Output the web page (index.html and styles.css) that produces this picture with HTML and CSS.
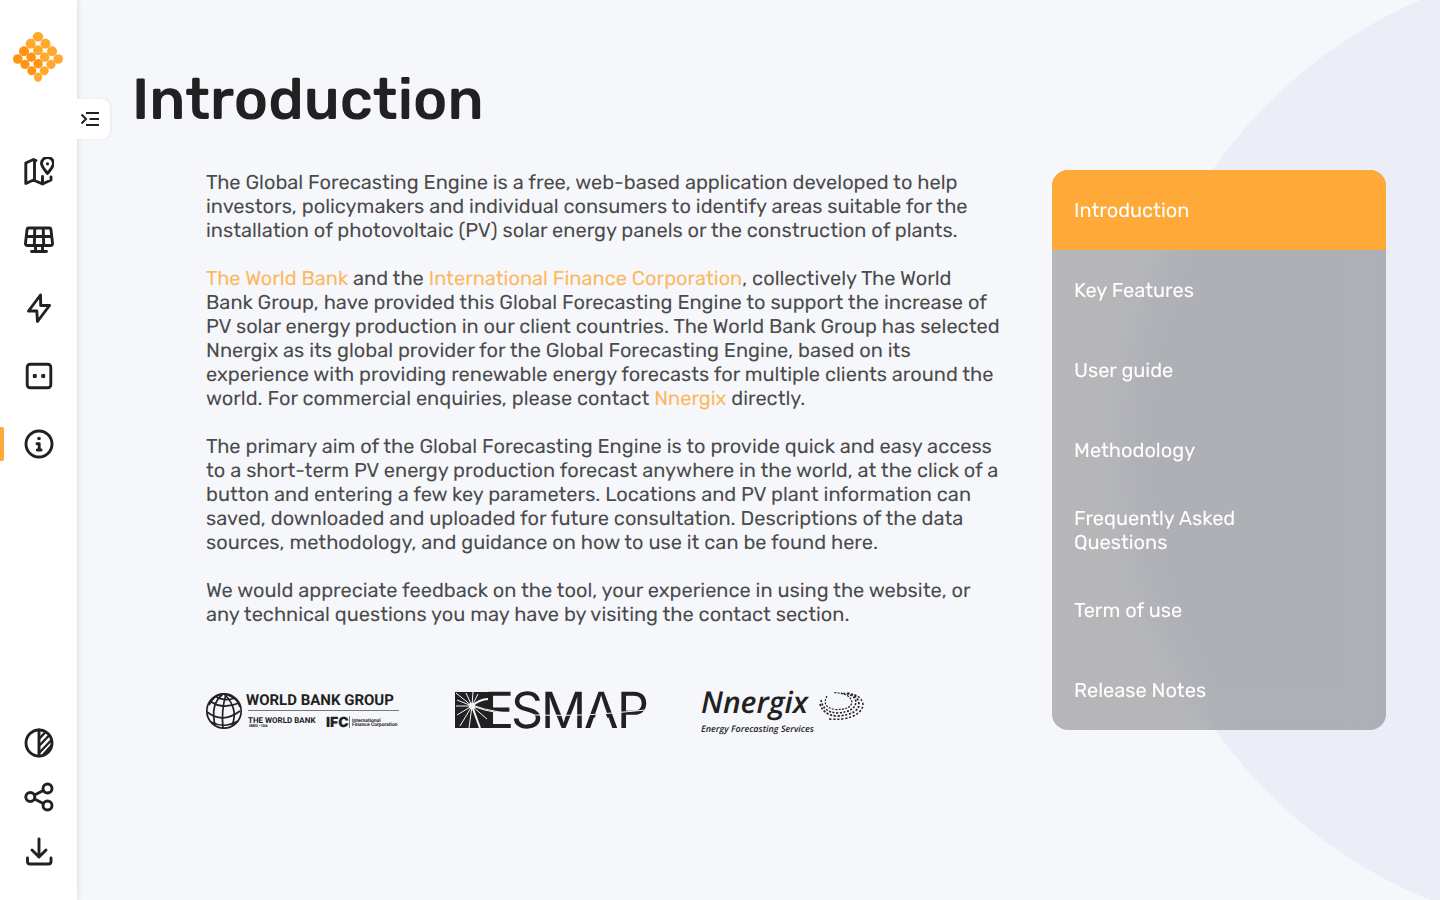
FILE: index.html
```html
<!DOCTYPE html>
<html lang="en">
<head>
<meta charset="utf-8">
<meta name="viewport" content="width=device-width, initial-scale=1">
<title>Global Forecasting Engine – Introduction</title>
<link rel="stylesheet" href="styles.css">
</head>
<body>
<div class="app">
  <aside class="sidebar">
    <a class="brand" href="#" aria-label="Home">
      <svg width="52" height="50" viewBox="0 0 52 50" fill="#ffa92f">
        <ellipse cx="25" cy="4.8" rx="5.3" ry="4.8"/>
        <circle cx="17.7" cy="11.8" r="5"/><circle cx="32.5" cy="11.8" r="5"/>
        <circle cx="11" cy="19.2" r="5" fill="#ff9312"/><circle cx="25" cy="18.3" r="5"/><circle cx="39" cy="19.2" r="5"/>
        <circle cx="4.8" cy="27" r="4.8" fill="#ff9312"/><circle cx="18.2" cy="25.2" r="4.8" fill="#ff9312"/><circle cx="31.7" cy="25.2" r="4.8"/><circle cx="45.2" cy="27" r="4.8"/>
        <circle cx="12" cy="32.4" r="4.6" fill="#ff9312"/><circle cx="25" cy="31.7" r="4.7" fill="#ff9312"/><circle cx="38" cy="32.4" r="4.6"/>
        <circle cx="18.8" cy="38.8" r="4.5" fill="#ff9312"/><circle cx="31.2" cy="38.8" r="4.5"/>
        <ellipse cx="25" cy="45.2" rx="4.1" ry="4.7"/>
      </svg>
    </a>
    <button class="expand" type="button" aria-label="Expand menu">
      <svg width="20" height="16" viewBox="0 0 20 16" fill="none" stroke="#212121" stroke-width="2">
        <path d="M1.500 3.500l4.500 4.500-4.500 4.500M6 2h13M9.500 8H19M6 14h13"/>
      </svg>
    </button>
    <nav class="tools" aria-label="Main">
      <button class="tool" type="button" aria-label="Map">
        <svg class="icon" viewBox="0 0 30 30"><path d="M12 3.500 9.500 2.500 1.800 6v20.500l7.700-3.500 9 4 8.500-4v-3M10.500 3V23M18.500 19.500v7"/><path d="M23.500 16.500C20.800 12.800 17.500 9.500 17.500 6.500a6 6 0 0 1 12 0C29.500 9.500 26.200 12.800 23.500 16.500Z"/><circle class="dot" cx="23.500" cy="6.800" r="1.600"/></svg>
      </button>
      <button class="tool" type="button" aria-label="Solar panels">
        <svg class="icon" viewBox="0 0 30 30"><path d="M4.500 3h21q1.200 0 1.400 1.200l1.600 14q.2 2.300-2 2.300h-23q-2.200 0-2-2.300l1.600-14Q3.300 3 4.500 3ZM2.500 11.500h25M10.800 3 10.300 20.500M19.200 3l.5 17.500M11.500 21v5M18.500 21v5M7.500 26.500h15"/></svg>
      </button>
      <button class="tool" type="button" aria-label="Energy">
        <svg class="icon" viewBox="0 0 30 30"><path d="M16.500 2 4.500 18h8.300l.7 10.500L25.500 12.500h-8.800Z"/></svg>
      </button>
      <button class="tool" type="button" aria-label="Socket">
        <svg class="icon" viewBox="0 0 30 30"><rect x="3.200" y="3.200" width="23.600" height="23.600" rx="3"/><circle class="dot" cx="10.800" cy="15" r="2.200"/><circle class="dot" cx="19.200" cy="15" r="2.200"/></svg>
      </button>
      <button class="tool tool-active" type="button" aria-label="Information" aria-current="page">
        <svg class="icon" viewBox="0 0 30 30"><circle cx="15" cy="15" r="13"/><path d="M13 14.700h2.200v6.300M13.300 21h3.800"/><circle class="dot" cx="15" cy="9.500" r="1.800"/></svg>
      </button>
    </nav>
    <div class="actions">
      <button class="action" type="button" aria-label="Contrast">
        <svg class="icon" viewBox="0 0 30 30"><circle cx="15" cy="15" r="13"/><path d="M15 2v26"/><path stroke-width="2.400" d="M15.500 10.500l5.500-6M15.500 17.500l9.500-10M15.500 24.500l12-12.500M18.500 27.500l9-10"/></svg>
      </button>
      <button class="action" type="button" aria-label="Share">
        <svg class="icon" viewBox="0 0 30 30"><circle cx="6.300" cy="15" r="4.500"/><circle cx="23.500" cy="6.500" r="4.500"/><circle cx="23.500" cy="23.500" r="4.500"/><path d="M10.500 13 19.300 8.500M10.500 17l8.800 4.500"/></svg>
      </button>
      <button class="action" type="button" aria-label="Download">
        <svg class="icon" viewBox="0 0 30 30"><path d="M15 3V20.500M8 14l7 7 7-7M3.500 22V25.500q0 2.500 2.500 2.500h18.500q2.500 0 2.500-2.500v-3.500"/></svg>
      </button>
    </div>
  </aside>

  <main class="main">
    <h1 class="title">Introduction</h1>
    <div class="content">
      <article class="article">
        <div class="copy">
          <p>The Global Forecasting Engine is a free, web-based application developed to help investors, policymakers and individual consumers to identify areas suitable for the installation of photovoltaic (PV) solar energy panels or the construction of plants.</p>
          <p><a href="#">The World Bank</a> and the <a href="#">International Finance Corporation</a>, collectively The World Bank Group, have provided this Global Forecasting Engine to support the increase of PV solar energy production in our client countries. The World Bank Group has selected Nnergix as its global provider for the Global Forecasting Engine, based on its experience with providing renewable energy forecasts for multiple clients around the world. For commercial enquiries, please contact <a href="#">Nnergix</a> directly.</p>
          <p>The primary aim of the Global Forecasting Engine is to provide quick and easy access to a short-term PV energy production forecast anywhere in the world, at the click of a button and entering a few key parameters. Locations and PV plant information can saved, downloaded and uploaded for future consultation. Descriptions of the data sources, methodology, and guidance on how to use it can be found here.</p>
          <p>We would appreciate feedback on the tool, your experience in using the website, or any technical questions you may have by visiting the contact section.</p>
        </div>
        <div class="partners">
          <svg class="partner" width="195" height="44" viewBox="0 0 195 44">
            <g fill="none" stroke="#212121" stroke-width="1.700">
              <circle cx="18" cy="19" r="17.200"/>
              <path d="M4 9Q16 18 33 11M1 20q16 12 33-1M5 30q13 7 27-1M9 4q9 6 20 2"/>
              <path d="M17 2Q4 12 9 33M20 2q-5 17-3 34M18 2q15 14 8 32M17 2Q8 3 3 13M19 2q13 4 15 13"/>
            </g>
            <text class="wb-name" x="40" y="13">WORLD BANK GROUP</text>
            <path d="M42 18.500h151" stroke="#77777a" stroke-width="1"/>
            <text class="wb-sub" x="42" y="31">THE WORLD BANK</text>
            <text class="wb-tiny" x="43" y="35">IBRD • IDA</text>
            <text class="wb-ifc" x="120" y="35">IFC</text>
            <path d="M143.500 24v12" stroke="#77777a" stroke-width="1"/>
            <text class="wb-fin" x="146" y="30">International</text>
            <text class="wb-fin" x="146" y="34">Finance Corporation</text>
          </svg>
          <svg class="partner" width="193" height="44" viewBox="0 0 193 44">
            <path d="M0 0h36v36H0Z" fill="#212121"/>
            <text class="esmap" y="36" x="29 56 86 129 162">ESMAP</text>
            <path d="m146 8 7 20h-14Z" fill="#f6f7fb"/>
            <g stroke="#f6f7fb" stroke-width="1" fill="none">
              <path d="M17 14 1 1M17 14 2 8M17 14H1M17 14 2 23M17 14 5 34M17 14l-3 22M17 14 11 1M17 14l1-14M17 14l6-12M17 14l15 13"/>
              <path d="M17 14 25 36M17 14Q25 7 33 7" stroke-width="2"/>
              <path d="M17 13Q40 22 80 23T145 22T191 18M17 14Q40 23 80 24"/>
            </g>
            <circle cx="17" cy="14" r="3.200" fill="#f6f7fb"/>
          </svg>
          <svg class="partner" width="163" height="44" viewBox="0 0 163 44">
            <text class="nn-name" x="-1" y="21">Nnergix</text>
            <text class="nn-sub" x="-1" y="40">Energy Forecasting Services</text>
            <g fill="none" stroke="#212121">
              <path d="M125 4Q119 15 133 17.500Q149 18 150 10Q148 1 131 .5" stroke-width="1.200" stroke-dasharray="2 1.300"/>
              <path d="M119 8Q121 20 135 21Q153 20 154 10Q153 2 139 1" stroke-width="1.600" stroke-dasharray="2 1.600"/>
              <path d="M118 12Q122 24 136 24Q157 22 157 12Q156 3 145 1" stroke-width="1.700" stroke-dasharray="2.200 1.600"/>
              <path d="M127 27Q141 28 149 25Q161 20 161 12Q159 4 150 2" stroke-width="1.500" stroke-dasharray="2.200 1.800"/>
            </g>
          </svg>
        </div>
      </article>
      <nav class="menu" aria-label="Information sections">
        <a class="menu-item menu-active" href="#" aria-current="page"><span>Introduction</span></a>
        <a class="menu-item" href="#"><span>Key Features</span></a>
        <a class="menu-item" href="#"><span>User guide</span></a>
        <a class="menu-item" href="#"><span>Methodology</span></a>
        <a class="menu-item" href="#"><span>Frequently Asked Questions</span></a>
        <a class="menu-item" href="#"><span>Term of use</span></a>
        <a class="menu-item" href="#"><span>Release Notes</span></a>
      </nav>
    </div>
  </main>
</div>
</body>
</html>
```
FILE: styles.css
```css
* { box-sizing: border-box; }
body {
  margin: 0;
  color: #212121;
  font-family: Rubik, Roboto, sans-serif;
  font-size: 20px;
  line-height: 24px;
  text-rendering: geometricPrecision;
}
button {
  padding: 0;
  border: 0;
  background: none;
  cursor: pointer;
}
svg { display: block; }
.app {
  display: flex;
  min-height: 100vh;
  background: radial-gradient(circle at calc(100% + 173px) 448px, #ebeef7 487px, #f6f7fb 488px);
}
.sidebar {
  position: relative;
  z-index: 1;
  flex: none;
  display: flex;
  flex-direction: column;
  width: 77px;
  padding: 32px 0 22px;
  background: #fff;
  box-shadow: 0 0 6px rgba(33, 33, 60, .16);
}
.brand { align-self: center; }
.expand {
  position: absolute;
  top: 99px;
  left: 100%;
  display: flex;
  align-items: center;
  width: 33px;
  height: 40px;
  padding-left: 3px;
  border-radius: 0 8px 8px 0;
  background: #fff;
  box-shadow: 1px 0 2px rgba(33, 33, 60, .08);
}
.tools {
  display: flex;
  flex-direction: column;
  margin-top: 56px;
}
.tool, .action {
  position: relative;
  display: flex;
  align-items: center;
  justify-content: center;
  width: 100%;
  height: 68px;
}
.tool-active::before {
  content: "";
  position: absolute;
  left: 0;
  width: 4px;
  height: 34px;
  border-radius: 0 2px 2px 0;
  background: #ffa938;
}
.actions { margin-top: auto; }
.action { height: 54px; }
.icon {
  width: 30px;
  height: 30px;
  fill: none;
  stroke: #212121;
  stroke-width: 2.9;
  stroke-linecap: round;
  stroke-linejoin: round;
}
.icon .dot { fill: #212121; stroke: none; }
.main {
  flex: 1;
  padding: 64px 54px 64px 55px;
}
.title {
  margin: 0 0 34px;
  font-size: 58px;
  font-weight: 500;
  line-height: 72px;
}
.content {
  display: grid;
  grid-template-columns: 1fr 334px;
  gap: 52px;
  align-items: start;
  padding-left: 74px;
}
.copy { opacity: .8; }
.copy p { margin: 0 0 24px; }
.copy a { color: #ffa938; text-decoration: none; }
.partners {
  display: flex;
  gap: 54px;
  margin-top: 66px;
}
.partner { fill: #212121; overflow: visible; }
.wb-name { font: 700 15px Roboto, sans-serif; }
.wb-sub { font: 700 8px Roboto, sans-serif; }
.wb-tiny { font: 700 4px Roboto, sans-serif; }
.wb-ifc { font: 900 14px Inter, sans-serif; }
.wb-fin { font: 700 5px Roboto, sans-serif; }
.esmap { font: 400 50px Inter, sans-serif; }
.nn-name { font: italic 600 30px "Open Sans", sans-serif; }
.nn-sub { font: italic 600 9px "Open Sans", sans-serif; }
.menu {
  overflow: hidden;
  border-radius: 16px;
  background: rgba(33, 33, 33, .3);
  backdrop-filter: blur(16px);
}
.menu-item {
  display: flex;
  align-items: center;
  height: 80px;
  padding: 0 100px 0 22px;
  color: #fff;
  text-decoration: none;
}
.menu-active { background: #ffa938; }
```
